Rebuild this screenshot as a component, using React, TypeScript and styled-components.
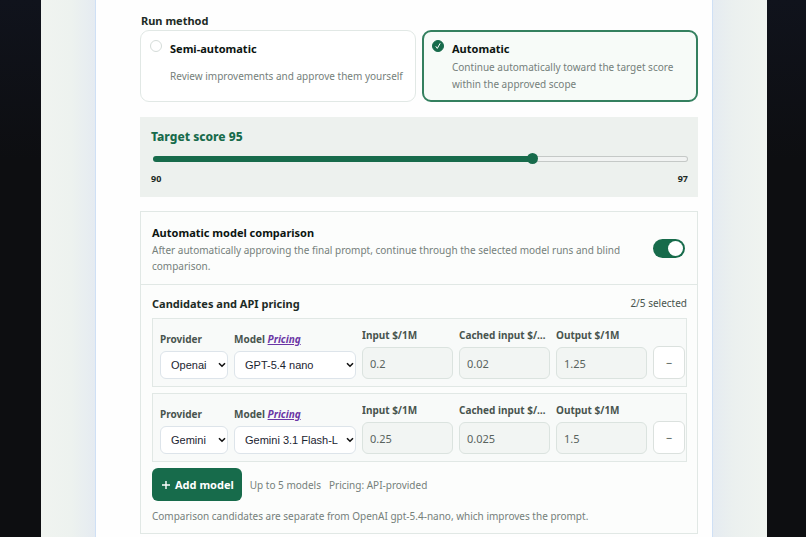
import React, { useId, useState } from "react";
import styled, { createGlobalStyle } from "styled-components";

const green = "#176b4b";
const line = "#e1e8e5";
const muted = "#75807b";
const ui = '"Noto Sans", "Open Sans", sans-serif';

const GlobalStyle = createGlobalStyle`
  *, *::before, *::after { box-sizing: border-box; }
  body {
    margin: 0;
    background: linear-gradient(#10131c, #0d0e11 160px);
    color: #1d2b25;
    font: 11px/16px ${ui};
  }
  p, h2, h3, fieldset { margin: 0; padding: 0; border: 0; }
  button, input { font: inherit; color: inherit; }
`;

const Backdrop = styled.div`
  margin: 0 39px 0 41px;
  padding: 0 54px;
  min-height: 100vh;
  display: flex;
  background: linear-gradient(
    90deg,
    #f0f4f0 0,
    #edf2ef 30px,
    #e5ebf1 54px,
    #e5ebf1 calc(100% - 54px),
    #ebf0ef calc(100% - 34px),
    #f0f4f0 100%
  );
`;

const Dialog = styled.main`
  flex: 1;
  min-width: 0;
  padding: 12px 14px 2px 44px;
  background: #fefefe;
  border: solid #cfe0f5;
  border-width: 0 1px;
`;

const Methods = styled.fieldset`
  display: grid;
  grid-template-columns: 1fr 1fr;
  gap: 0 6px;
  min-width: 0;
`;

const Legend = styled.legend`
  padding: 0 1px;
  font-weight: 700;
  line-height: 18px;
`;

const MethodCard = styled.label<{ $active: boolean }>`
  display: grid;
  grid-template-columns: 12px 1fr;
  column-gap: 8px;
  min-height: 72px;
  padding: ${(p) => (p.$active ? "7px 8px" : "8px 9px")};
  border: ${(p) => (p.$active ? `2px solid #34805f` : `1px solid ${line}`)};
  border-radius: 9px;
  background: ${(p) => (p.$active ? "#f7fbf8" : "#fff")};
  cursor: pointer;
`;

const Mark = styled.span`
  display: grid;
  width: 12px;
  height: 12px;
  margin-top: 1px;

  > * { grid-area: 1 / 1; }
  svg { pointer-events: none; }
`;

const Radio = styled.input`
  appearance: none;
  width: 12px;
  height: 12px;
  margin: 0;
  border: 1px solid #d5dcd9;
  border-radius: 50%;
  background: #fff;

  &:checked {
    border-color: ${green};
    background: ${green};
  }
`;

const MethodText = styled.span`
  display: flex;
  flex-direction: column;
`;

const MethodTitle = styled.strong`
  color: #0c1511;
  line-height: 20px;
`;

const MethodNote = styled.span`
  display: flex;
  flex: 1;
  align-items: center;
  color: ${muted};
  font-size: 10px;
  line-height: 17px;
`;

const ScorePanel = styled.section`
  margin-top: 15px;
  padding: 10px 10px 10px 11px;
  background: #edf1ee;
`;

const ScoreTitle = styled.label`
  display: block;
  color: ${green};
  font-size: 12px;
  font-weight: 800;
  line-height: 20px;
`;

const Slider = styled.input<{ $ratio: number }>`
  appearance: none;
  display: block;
  width: calc(100% - 2px);
  height: 11px;
  margin: 6px 0 7px 2px;
  background: transparent;

  &::-webkit-slider-runnable-track {
    height: 6px;
    border: 1px solid transparent;
    border-radius: 3px;
    background:
      linear-gradient(${green}, ${green}) border-box 0 0 / ${(p) => p.$ratio * 100}% 100% no-repeat,
      linear-gradient(#f1f3f2, #f1f3f2) padding-box,
      linear-gradient(#c5c9c7, #c5c9c7) border-box;
  }

  &::-webkit-slider-thumb {
    appearance: none;
    width: 11px;
    height: 11px;
    margin-top: -4px;
    border-radius: 50%;
    background: ${green};
  }
`;

const Scale = styled.div`
  display: flex;
  justify-content: space-between;
  font-size: 9px;
  font-weight: 700;
`;

const Comparison = styled.section`
  margin-top: 14px;
  border: 1px solid ${line};
  background: #fcfdfc;
`;

const ComparisonHead = styled.header`
  display: flex;
  align-items: center;
  justify-content: space-between;
  gap: 16px;
  min-height: 73px;
  padding: 9px 12px 9px 11px;
  border-bottom: 1px solid ${line};
`;

const Title = styled.label`
  display: block;
  color: #0c1511;
  font-weight: 700;
  line-height: 19px;
`;

const Note = styled.p`
  color: ${muted};
  font-size: 10px;
`;

const Toggle = styled.input`
  appearance: none;
  flex: none;
  width: 32px;
  height: 19px;
  margin: 0;
  padding: 2px;
  border-radius: 10px;
  background: #c5cdc9;

  &::before {
    content: "";
    display: block;
    width: 15px;
    height: 15px;
    border-radius: 50%;
    background: #fff;
  }
  &:checked { background: ${green}; }
  &:checked::before { margin-left: auto; }
`;

const Candidates = styled.div`
  display: flex;
  flex-direction: column;
  gap: 6px;
  padding: 10px 10px 9px 11px;
`;

const CandidatesHead = styled.div`
  display: flex;
  align-items: center;
  justify-content: space-between;
  color: #48544e;
  font-size: 10px;
  line-height: 17px;
`;

const Subtitle = styled.h3`
  color: #1d2b25;
  font-size: 11px;
  font-weight: 700;
`;

const CandidateRow = styled.div`
  display: grid;
  grid-template-columns: 68px 122px repeat(3, minmax(0, 1fr)) 32px;
  align-items: end;
  gap: 6px;
  padding: 8px 1px 7px 7px;
  border: 1px solid ${line};
  background: #f8faf9;
`;

const Field = styled.div`
  display: flex;
  flex-direction: column;
  gap: 3px;
  min-width: 0;
`;

const FieldLabel = styled.div`
  overflow: hidden;
  color: #48544e;
  font-size: 10px;
  font-weight: 700;
  line-height: 17px;
  text-overflow: ellipsis;
  white-space: nowrap;
`;

const PricingLink = styled.a`
  color: #6b35a5;
  font-style: italic;
  text-decoration: underline;
`;

const SelectBox = styled.div`
  display: grid;
  align-items: center;

  > * { grid-area: 1 / 1; }
  svg {
    justify-self: end;
    margin-right: 2px;
    pointer-events: none;
  }
`;

const Select = styled.select`
  appearance: none;
  width: 100%;
  height: 28px;
  padding: 0 17px 0 10px;
  border: 1px solid #dde4ea;
  border-radius: 6px;
  background-color: #fff;
  color: #1b2430;
  font: 11px "Liberation Sans", Arial, sans-serif;
`;

const Price = styled.input`
  width: 100%;
  height: 32px;
  padding: 0 7px;
  border: 1px solid #dbe3df;
  border-radius: 6px;
  background: #f2f5f3;
  color: #59635e;
`;

const RemoveButton = styled.button`
  height: 33px;
  padding: 0;
  border: 1px solid #dbe1de;
  border-radius: 6px;
  background: #fff;
  color: #48544e;
`;

const Actions = styled.div`
  display: flex;
  align-items: center;
  gap: 8px;
  color: ${muted};
  font-size: 10px;
`;

const AddButton = styled.button`
  display: flex;
  align-items: center;
  gap: 4px;
  height: 33px;
  padding: 0 8px 0 9px;
  border: 0;
  border-radius: 6px;
  background: ${green};
  color: #fff;
  font-size: 11px;
  font-weight: 700;
`;

const Footnote = styled.p`
  padding-top: 1px;
  color: ${muted};
  font-size: 10px;
`;

type Candidate = { provider: string; model: string; input: string; cached: string; output: string };

const initial: Candidate[] = [
  { provider: "Openai", model: "GPT-5.4 nano", input: "0.2", cached: "0.02", output: "1.25" },
  { provider: "Gemini", model: "Gemini 3.1 Flash-Lite", input: "0.25", cached: "0.025", output: "1.5" },
];

const methods = [
  { id: "semi", title: "Semi-automatic", note: "Review improvements and approve them yourself" },
  { id: "auto", title: "Automatic", note: "Continue automatically toward the target score within the approved scope" },
];

function PriceField({ label, value }: { label: string; value: string }) {
  const id = useId();
  return (
    <Field>
      <FieldLabel as="label" htmlFor={id}>{label}</FieldLabel>
      <Price id={id} value={value} readOnly />
    </Field>
  );
}

function SelectField({ id, options, value }: { id: string; options: string[]; value: string }) {
  return (
    <SelectBox>
      <Select id={id} defaultValue={value}>
        {options.map((o) => (
          <option key={o}>{o}</option>
        ))}
      </Select>
      <svg width="8" height="6" viewBox="0 0 8 6" fill="none" stroke="#111" strokeWidth="1.6">
        <path d="M1 1.2 4 4.2 7 1.2" />
      </svg>
    </SelectBox>
  );
}

function CandidateEditor({ item, onRemove }: { item: Candidate; onRemove: () => void }) {
  const id = useId();
  return (
    <CandidateRow>
      <Field>
        <FieldLabel as="label" htmlFor={id + "p"}>Provider</FieldLabel>
        <SelectField id={id + "p"} options={["Openai", "Gemini"]} value={item.provider} />
      </Field>
      <Field>
        <FieldLabel>
          <label htmlFor={id + "m"}>Model</label> <PricingLink href="#pricing">Pricing</PricingLink>
        </FieldLabel>
        <SelectField id={id + "m"} options={[item.model]} value={item.model} />
      </Field>
      <PriceField label="Input $/1M" value={item.input} />
      <PriceField label="Cached input $/1M" value={item.cached} />
      <PriceField label="Output $/1M" value={item.output} />
      <RemoveButton type="button" aria-label="Remove model" onClick={onRemove}>−</RemoveButton>
    </CandidateRow>
  );
}

export default function App() {
  const [method, setMethod] = useState("auto");
  const [score, setScore] = useState(95);
  const [compare, setCompare] = useState(true);
  const [items, setItems] = useState(initial);

  return (
    <>
      <GlobalStyle />
      <Backdrop>
        <Dialog>
          <Methods>
            <Legend>Run method</Legend>
            {methods.map((m) => (
              <MethodCard key={m.id} $active={method === m.id}>
                <Mark>
                  <Radio type="radio" name="method" checked={method === m.id} onChange={() => setMethod(m.id)} />
                  {method === m.id && (
                    <svg width="12" height="12" viewBox="0 0 12 12" fill="none" stroke="#fff" strokeLinecap="round">
                      <path d="M4 6.6 5.3 8.4 8 3.6" />
                    </svg>
                  )}
                </Mark>
                <MethodText>
                  <MethodTitle>{m.title}</MethodTitle>
                  <MethodNote>{m.note}</MethodNote>
                </MethodText>
              </MethodCard>
            ))}
          </Methods>

          <ScorePanel>
            <ScoreTitle htmlFor="score">Target score {score}</ScoreTitle>
            <Slider
              id="score"
              type="range"
              min={90}
              max={97}
              value={score}
              $ratio={(score - 90) / 7}
              onChange={(e) => setScore(Number(e.target.value))}
            />
            <Scale>
              <span>90</span>
              <span>97</span>
            </Scale>
          </ScorePanel>

          <Comparison>
            <ComparisonHead>
              <div>
                <Title htmlFor="compare">Automatic model comparison</Title>
                <Note>
                  After automatically approving the final prompt, continue through the selected model runs and blind
                  comparison.
                </Note>
              </div>
              <Toggle id="compare" type="checkbox" role="switch" checked={compare} onChange={() => setCompare(!compare)} />
            </ComparisonHead>
            <Candidates>
              <CandidatesHead>
                <Subtitle>Candidates and API pricing</Subtitle>
                <span>{items.length}/5 selected</span>
              </CandidatesHead>
              {items.map((item) => (
                <CandidateEditor
                  key={item.model}
                  item={item}
                  onRemove={() => setItems(items.filter((i) => i !== item))}
                />
              ))}
              <Actions>
                <AddButton type="button">
                  <svg width="10" height="10" viewBox="0 0 10 10" stroke="#fff" strokeWidth="1.4">
                    <path d="M5 1v8M1 5h8" />
                  </svg>
                  Add model
                </AddButton>
                <span>Up to 5 models</span>
                <span>Pricing: API-provided</span>
              </Actions>
              <Footnote>Comparison candidates are separate from OpenAI gpt-5.4-nano, which improves the prompt.</Footnote>
            </Candidates>
          </Comparison>
        </Dialog>
      </Backdrop>
    </>
  );
}
